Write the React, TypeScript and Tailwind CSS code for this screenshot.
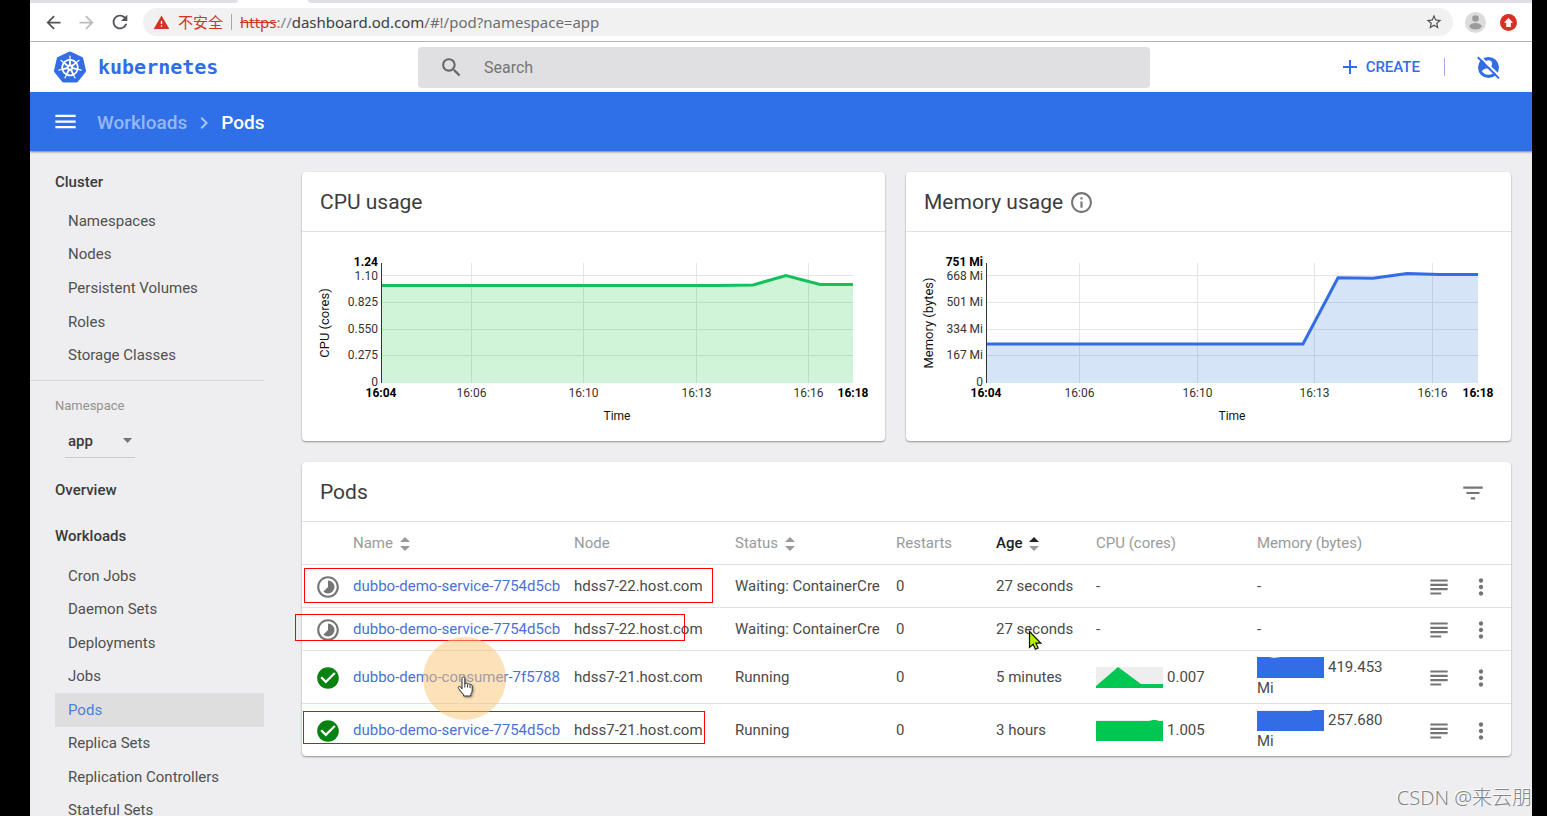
import type { ReactNode } from "react";
import {
	MdAdd,
	MdArrowBack,
	MdArrowForward,
	MdCheckCircle,
	MdChevronRight,
	MdFilterList,
	MdInfoOutline,
	MdMenu,
	MdMoreVert,
	MdRefresh,
	MdSearch,
	MdStarBorder,
	MdSubject,
	MdTimelapse,
	MdWarning,
} from "react-icons/md";
import { SiKubernetes } from "react-icons/si";

type Point = [number, number];

type ChartProps = {
	label: string;
	width: number;
	left: number;
	right: number;
	line: Point[];
	stroke: string;
	fill: string;
	yTicks: string[];
	xTicks: { x: number; text: string }[];
};

type Pod = {
	name: string;
	node: string;
	status: string;
	age: string;
	cpu?: { value: string; points: string };
	memory?: { value: string; points: string };
};

const clusterLinks = ["Namespaces", "Nodes", "Persistent Volumes", "Roles", "Storage Classes"];

const workloadLinks = [
	"Cron Jobs",
	"Daemon Sets",
	"Deployments",
	"Jobs",
	"Pods",
	"Replica Sets",
	"Replication Controllers",
	"Stateful Sets",
];

const pods: Pod[] = [
	{
		name: "dubbo-demo-service-7754d5cb",
		node: "hdss7-22.host.com",
		status: "Waiting: ContainerCre",
		age: "27 seconds",
	},
	{
		name: "dubbo-demo-service-7754d5cb",
		node: "hdss7-22.host.com",
		status: "Waiting: ContainerCre",
		age: "27 seconds",
	},
	{
		name: "dubbo-demo-consumer-7f5788",
		node: "hdss7-21.host.com",
		status: "Running",
		age: "5 minutes",
		cpu: { value: "0.007", points: "0,21 0,19 22,0 45,17 67,17 67,21" },
		memory: { value: "419.453 Mi", points: "0,21 0,0 12,0 17,1 24,0 67,0 67,21" },
	},
	{
		name: "dubbo-demo-service-7754d5cb",
		node: "hdss7-21.host.com",
		status: "Running",
		age: "3 hours",
		cpu: { value: "1.005", points: "0,21 0,1 53,1 57,0 60,0 63,1 67,1 67,21" },
		memory: { value: "257.680 Mi", points: "0,21 0,1 53,1 57,0 67,0 67,21" },
	},
];

const gridY = [43.5, 70.5, 97.5, 123.5];

function Chart({ label, width, left, right, line, stroke, fill, yTicks, xTicks }: ChartProps) {
	const points = line.map((p) => p.join(",")).join(" ");
	const [max, ...ticks] = yTicks;
	return (
		<svg viewBox={`0 0 ${width} 209`} className="block w-full" role="img" aria-label={label}>
			<g stroke="#e4e4e6">
				{gridY.map((y) => (
					<line key={y} x1={left} x2={right} y1={y} y2={y} />
				))}
				{xTicks.slice(1, -1).map((t) => (
					<line key={t.text} x1={t.x} x2={t.x} y1={31} y2={151} />
				))}
			</g>
			<polygon points={`${left},151 ${points} ${right},151`} fill={fill} />
			<polyline points={points} fill="none" stroke={stroke} strokeWidth="3" />
			<line x1={left + 0.5} x2={left + 0.5} y1={31} y2={151} stroke="#333" />
			<g fontSize="12" fill="#333" textAnchor="end">
				<text x={left - 3} y={34} fontWeight="700" fill="#000">
					{max}
				</text>
				{ticks.map((t, i) => (
					<text key={t} x={left - 3} y={[48, 74, 101, 127, 154][i]}>
						{t}
					</text>
				))}
			</g>
			<g fontSize="12" fill="#333" textAnchor="middle">
				{xTicks.map((t, i) => {
					const edge = i === 0 || i === xTicks.length - 1;
					return (
						<text key={t.text} x={t.x} y={165} fontWeight={edge ? 700 : 400} fill={edge ? "#000" : "#333"}>
							{t.text}
						</text>
					);
				})}
				<text x={(left + right) / 2} y={188} fill="#111">
					Time
				</text>
				<text transform="translate(27 91) rotate(-90)" fontSize="13" fill="#111">
					{label}
				</text>
			</g>
		</svg>
	);
}

function Card({ title, icon, children }: { title: string; icon?: ReactNode; children: ReactNode }) {
	return (
		<section className="rounded-sm bg-white shadow-[0_1px_2px_rgba(0,0,0,0.4)]">
			<div className="flex h-[60px] items-center gap-1.5 border-b border-[#e1e1e4] px-[18px] pt-0.5">
				<h2 className="text-[21px] text-[#3c3c3c]">{title}</h2>
				{icon}
			</div>
			{children}
		</section>
	);
}

function SortIcon({ active }: { active?: boolean }) {
	return (
		<svg width="10" height="14" viewBox="0 0 10 14" aria-hidden="true">
			<path d="M0 5 5 0l5 5z" fill={active ? "#212121" : "#9a9a9a"} />
			<path d="M0 9h10l-5 5z" fill="#9a9a9a" />
		</svg>
	);
}

function SortHeader({ text, active }: { text: string; active?: boolean }) {
	return (
		<button type="button" className="flex items-center gap-[7px]">
			{text}
			<SortIcon active={active} />
		</button>
	);
}

function Sparkline({ points, color }: { points: string; color: string }) {
	return (
		<svg width="67" height="21" viewBox="0 0 67 21" className="mr-1 inline-block bg-[#eee] align-top" aria-hidden="true">
			<polygon points={points} fill={color} />
		</svg>
	);
}

function BrowserBar() {
	return (
		<div className="border-b border-[#b4b4b8] bg-white">
			<div className="flex h-[3px]">
				<div className="w-[208px] rounded-br-sm bg-[#e0dfe5]" />
				<div className="w-[70px]" />
				<div className="flex-1 rounded-bl-sm bg-[#e0dfe5]" />
			</div>
			<div className="flex h-[38px] items-center pr-[15px] pl-[13px]">
				<button type="button" aria-label="Back" className="mr-3 text-[#505357]">
					<MdArrowBack size={21} />
				</button>
				<button type="button" aria-label="Forward" className="mr-3 text-[#bcbcbe]">
					<MdArrowForward size={21} />
				</button>
				<button type="button" aria-label="Reload" className="mr-3 text-[#505357]">
					<MdRefresh size={22} />
				</button>
				<div className="flex h-7 flex-1 items-center rounded-full bg-[#f1f1f2] px-2.5 font-['Noto_Sans','Noto_Sans_CJK_SC',sans-serif] text-[15px] text-[#3c4043]">
					<MdWarning size={17} className="mr-2 text-[#d23325]" />
					<span className="text-[#d23325]">不安全</span>
					<span className="mx-2 h-4 w-px bg-[#a8a8a8]" />
					<span className="flex-1 whitespace-nowrap">
						<span className="text-[#d23325] line-through">https</span>
						<span className="text-[#808488]">://</span>
						dashboard.od.com
						<span className="text-[#6b6f73]">/#!/pod?namespace=app</span>
					</span>
					<button type="button" aria-label="Bookmark" className="text-[#505357]">
						<MdStarBorder size={18} />
					</button>
				</div>
				<button type="button" aria-label="Profile" className="mr-3.5 ml-3">
					<svg width="21" height="21" viewBox="0 0 21 21">
						<circle cx="10.5" cy="10.5" r="10.5" fill="#dcdcde" />
						<circle cx="10.5" cy="6.5" r="3.3" fill="#9b9b9b" />
						<ellipse cx="10.5" cy="14.3" rx="6" ry="3.2" fill="#9b9b9b" />
					</svg>
				</button>
				<button type="button" aria-label="Update">
					<svg width="17" height="17" viewBox="0 0 17 17">
						<circle cx="8.5" cy="8.5" r="8.5" fill="#d93025" />
						<path d="M8.5 4 4 8.7h2.2V13h4.6V8.7H13z" fill="#fff" />
					</svg>
				</button>
			</div>
		</div>
	);
}

function Header() {
	return (
		<header className="flex h-[50px] items-center bg-white">
			<a href="#" className="flex w-[388px] items-center gap-3 pl-6 text-[#326de6]">
				<SiKubernetes size={32} />
				<span className="font-['DejaVu_Sans_Mono',monospace] text-xl font-bold">kubernetes</span>
			</a>
			<label className="flex h-[41px] flex-1 items-center rounded-sm bg-[#e0e0e2] pl-[21px] text-[#666]">
				<MdSearch size={25} />
				<input
					type="text"
					aria-label="Search"
					placeholder="Search"
					className="ml-5 flex-1 bg-transparent pt-0.5 text-base outline-none placeholder:text-[#757575]"
				/>
			</label>
			<div className="flex w-[382px] items-center justify-end pr-8 text-[#326de6]">
				<button type="button" className="flex items-center gap-1 text-[15px] font-medium">
					<MdAdd size={24} />
					CREATE
				</button>
				<span className="mx-6 h-[18px] w-px bg-[#a9a9e6]" />
				<button type="button" aria-label="User" className="ml-2">
					<svg width="23" height="23" viewBox="0 0 23 23">
						<circle cx="11.5" cy="11.5" r="10.5" fill="#326de6" />
						<circle cx="11.5" cy="7.8" r="3.6" fill="#fff" />
						<path d="M4.8 15.2c1.6-2.4 4.6-3 6.7-3s5.1.6 6.7 3c-1.6 2.4-4 3.5-6.7 3.5s-5.1-1.1-6.7-3.5z" fill="#fff" />
						<path d="M2.5 0 23 20.5" stroke="#fff" strokeWidth="2" />
						<path d="M.8 1.2 22 22.4" stroke="#326de6" strokeWidth="2" />
					</svg>
				</button>
			</div>
		</header>
	);
}

function NavList({ links, className }: { links: string[]; className: string }) {
	return (
		<ul className={className}>
			{links.map((text) => (
				<li key={text} className="flex flex-1">
					<a
						href="#"
						className={
							text === "Pods"
								? "flex flex-1 items-center bg-[#dedede] pl-[13px] text-[#4a7fdf]"
								: "flex flex-1 items-center pl-[13px]"
						}
					>
						{text}
					</a>
				</li>
			))}
		</ul>
	);
}

function Sidebar() {
	return (
		<nav className="w-[234px] shrink-0 text-[15px] leading-5 text-[#505050]">
			<div className="border-b border-[#d6d6d8] pt-[21px] pb-2 pl-[25px]">
				<a href="#" className="block font-medium text-[#3a3a3a]">
					Cluster
				</a>
				<NavList links={clusterLinks} className="mt-3 flex h-[168px] flex-col" />
			</div>
			<div className="pl-[25px]">
				<label htmlFor="namespace" className="mt-[15px] block text-[13px] text-[#929292]">
					Namespace
				</label>
				<div className="relative mt-2 ml-2.5 w-[70px]">
					<select
						id="namespace"
						className="h-[34px] w-full appearance-none border-b border-[#cacacc] bg-transparent pl-[3px] font-medium text-[#3a3a3a]"
					>
						<option>app</option>
					</select>
					<svg width="9" height="5" viewBox="0 0 9 5" className="pointer-events-none absolute top-3.5 right-[3px]">
						<path d="M0 0h9L4.5 5z" fill="#757575" />
					</svg>
				</div>
				<a href="#" className="mt-[22px] block font-medium text-[#3a3a3a]">
					Overview
				</a>
				<a href="#" className="mt-[26px] block font-medium text-[#3a3a3a]">
					Workloads
				</a>
				<NavList links={workloadLinks} className="mt-[13px] flex h-[268px] flex-col" />
			</div>
		</nav>
	);
}

function PodRow({ pod }: { pod: Pod }) {
	return (
		<tr className="h-[43px] border-t border-[#e1e1e4] [&>td]:pt-1.5 [&>td]:pb-1">
			<td className="pl-[13px]">
				{pod.cpu ? <MdCheckCircle size={26} className="text-[#0a820f]" /> : <MdTimelapse size={26} className="text-[#757575]" />}
			</td>
			<td>
				<a href="#" className="text-[#4a72d4]">
					{pod.name}
				</a>
			</td>
			<td>{pod.node}</td>
			<td>{pod.status}</td>
			<td>0</td>
			<td>{pod.age}</td>
			<td>
				{pod.cpu && <Sparkline points={pod.cpu.points} color="#00c752" />}
				{pod.cpu ? pod.cpu.value : "-"}
			</td>
			<td className="pr-5 whitespace-normal">
				{pod.memory && <Sparkline points={pod.memory.points} color="#326de6" />}
				{pod.memory ? pod.memory.value : "-"}
			</td>
			<td>
				<button type="button" aria-label="Logs" className="mx-auto block text-[#757575]">
					<MdSubject size={26} />
				</button>
			</td>
			<td className="pr-[9px]">
				<button type="button" aria-label="Actions" className="mx-auto block text-[#757575]">
					<MdMoreVert size={26} />
				</button>
			</td>
		</tr>
	);
}

function PodsTable() {
	return (
		<table className="w-full table-fixed text-left text-[15px] leading-[21px] whitespace-nowrap text-[#4a4a4a]">
			<colgroup>
				<col className="w-[51px]" />
				<col />
				<col className="w-[161px]" />
				<col className="w-[161px]" />
				<col className="w-[100px]" />
				<col className="w-[100px]" />
				<col className="w-[161px]" />
				<col className="w-[161px]" />
				<col className="w-[42px]" />
				<col className="w-[51px]" />
			</colgroup>
			<thead>
				<tr className="h-[42px] text-[#9a9a9a] [&>th]:pt-0.5 [&>th]:font-normal">
					<th />
					<th>
						<SortHeader text="Name" />
					</th>
					<th>Node</th>
					<th>
						<SortHeader text="Status" />
					</th>
					<th>Restarts</th>
					<th>
						<span className="font-medium text-[#212121]">
							<SortHeader text="Age" active />
						</span>
					</th>
					<th>CPU (cores)</th>
					<th>Memory (bytes)</th>
					<th />
					<th />
				</tr>
			</thead>
			<tbody>
				{pods.map((pod, i) => (
					<PodRow key={i} pod={pod} />
				))}
			</tbody>
		</table>
	);
}

// Marker boxes and pointers drawn over the pods table
function Annotations() {
	return (
		<div className="pointer-events-none">
			<div className="absolute top-[106px] left-0.5 h-[35px] w-[409px] border border-[#f00]" />
			<div className="absolute top-[152px] -left-[7px] h-[27px] w-[390px] border border-[#f00]" />
			<div className="absolute top-[249px] left-px h-[33px] w-[402px] border border-[#f00]" />
			<div className="absolute top-[175px] left-[121px] size-[83px] rounded-full bg-[#fbc371]/50" />
			<svg className="absolute top-[214px] left-[155px] drop-shadow-[1px_1px_1px_rgba(0,0,0,0.4)]" width="17" height="22" viewBox="0 0 17 22">
				<path
					d="M5 13V2.5C5 .5 7.8.5 7.8 2.5V8c.4-1.3 2.6-1.1 2.7.3.6-1 2.4-.7 2.5.6.8-.7 2.2-.2 2.2 1.1v4c0 2-1 3-1.4 4.5V20H6.6v-1.5C5 16.800 3 14.5 1.500 12.3c-.9-1.500.8-2.600 2-1.400z"
					fill="#fff"
					stroke="#333"
				/>
				<path d="M7.8 8v3.5M10.5 8.5v3M13 9.2V12" stroke="#333" />
			</svg>
			<svg className="absolute top-[168px] left-[726px]" width="14" height="21" viewBox="0 0 14 21">
				<path d="M1.5 1.5v16l3.6-3.3 2.3 5 2.8-1.2-2.3-4.8h4.9z" fill="#b4f000" stroke="#111" strokeWidth="1.2" />
			</svg>
		</div>
	);
}

export default function App() {
	return (
		<div className="h-screen overflow-hidden bg-black pr-[15px] pl-[30px] font-[Roboto,sans-serif]">
			<div className="relative flex h-full flex-col overflow-hidden bg-[#eeeef0]">
				<BrowserBar />
				<Header />
				<div className="relative flex h-[59px] shrink-0 items-center bg-[#2f70e8] pl-[22px] text-[19px] font-medium text-white shadow-[0_1px_2px_rgba(0,0,0,0.5)]">
					<button type="button" aria-label="Menu" className="mr-[18px]">
						<MdMenu size={27} />
					</button>
					<div className="flex items-center pt-[3px]">
						<a href="#" className="text-white/50">
							Workloads
						</a>
						<MdChevronRight size={24} className="mx-[5px] text-white/60" />
						<h1>Pods</h1>
					</div>
				</div>
				<div className="flex min-h-0 flex-1">
					<Sidebar />
					<main className="flex min-w-0 flex-1 flex-col gap-[21px] pt-[21px] pr-[21px] pl-[38px]">
						<div className="grid grid-cols-[583fr_605fr] gap-[21px]">
							<Card title="CPU usage">
								<Chart
									label="CPU (cores)"
									width={583}
									left={79}
									right={551}
									stroke="#14c05a"
									fill="rgba(20,200,60,0.2)"
									line={[[79, 53.5], [415, 53.5], [451, 53], [484, 43.5], [518, 52.5], [551, 52.5]]}
									yTicks={["1.24", "1.10", "0.825", "0.550", "0.275", "0"]}
									xTicks={[
										{ x: 79, text: "16:04" },
										{ x: 169.5, text: "16:06" },
										{ x: 281.5, text: "16:10" },
										{ x: 394.5, text: "16:13" },
										{ x: 506.5, text: "16:16" },
										{ x: 551, text: "16:18" },
									]}
								/>
							</Card>
							<Card title="Memory usage" icon={<MdInfoOutline size={25} className="text-[#757575]" />}>
								<Chart
									label="Memory (bytes)"
									width={605}
									left={80}
									right={572}
									stroke="#326de6"
									fill="rgba(50,120,214,0.2)"
									line={[[80, 112], [397, 112], [432, 45.8], [467, 46.2], [501, 41.5], [534, 42.4], [572, 42.4]]}
									yTicks={["751 Mi", "668 Mi", "501 Mi", "334 Mi", "167 Mi", "0"]}
									xTicks={[
										{ x: 80, text: "16:04" },
										{ x: 173.5, text: "16:06" },
										{ x: 291.5, text: "16:10" },
										{ x: 408.5, text: "16:13" },
										{ x: 526.5, text: "16:16" },
										{ x: 572, text: "16:18" },
									]}
								/>
							</Card>
						</div>
						<div className="relative">
							<Card
								title="Pods"
								icon={
									<button type="button" aria-label="Filter" className="mr-[7px] ml-auto text-[#757575]">
										<MdFilterList size={26} />
									</button>
								}
							>
								<PodsTable />
							</Card>
							<Annotations />
						</div>
					</main>
				</div>
				<p className="absolute right-0 bottom-1 font-['Noto_Sans','Noto_Sans_CJK_SC',sans-serif] text-xl leading-7 font-light whitespace-nowrap text-[#868686] [text-shadow:-1px_-1px_0_#fff]">
					CSDN @来云朋
				</p>
			</div>
		</div>
	);
}
